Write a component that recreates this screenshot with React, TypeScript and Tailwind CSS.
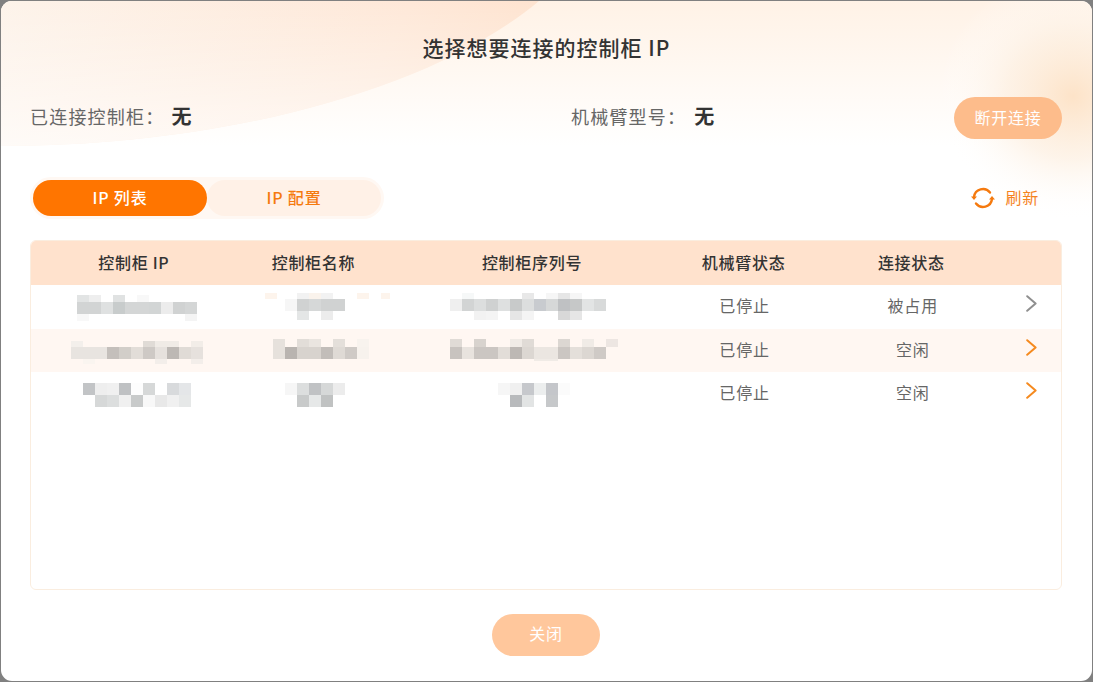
import React from "react"

const COLS = [206, 154, 284, 140, 196, 52]
const ROW_H = 43.6

// one band of mosaic cells; x and y are relative to the table cell
type Band = { x: number; y: number; h: number; cells: string[] }

const Mosaic = ({ width, bands }: { width: number; bands: Band[] }) => (
  <svg width={width} height={ROW_H} className="block" shapeRendering="crispEdges">
    {bands.map((b, i) =>
      b.cells.map((c, j) =>
        c ? <rect key={`${i}-${j}`} x={b.x - 1 + j * 12} y={b.y} width={12} height={b.h} fill={c} /> : null,
      ),
    )}
  </svg>
)

const rows = [
  {
    arm: "已停止",
    status: "被占用",
    active: false,
    ip: [
      { x: 47, y: 10, h: 7, cells: ["#e2e4e4", "#eeeeee", "", "#e0e2e2", "", "#f8f8f8"] },
      { x: 47, y: 17, h: 12, cells: ["#d2d4d4", "#d2d4d4", "#dfe1e1", "#c8cccc", "#d4d6d6", "#d4d6d6", "#d2d5d5", "#ececec", "#d0d2d2", "#d4d6d6"] },
      { x: 47, y: 29, h: 7, cells: ["#f8f8f8", "", "", "", "", "", "", "", "", "#f4f4f4"] },
    ],
    name: [
      { x: 49, y: 8, h: 6, cells: ["", "#f2f2f2", "#faf3ec", "#f2f2f2"] },
      { x: 49, y: 14, h: 12, cells: ["#f6f6f6", "#d0d2d2", "#d6d8d8", "#d0d2d2", "#d0d2d2"] },
      { x: 49, y: 26, h: 9, cells: ["", "#e4e6e6", "", "#ececec"] },
      { x: 121, y: 8, h: 6, cells: ["#fdf4ec", "", "#fdf4ec"] },
      { x: 29, y: 8, h: 6, cells: ["#fdf4ec"] },
    ],
    serial: [
      { x: 61, y: 8, h: 6, cells: ["", "#f6f8f8", "", "", "", "", "#e8e8e8", "", "#f6f6f6", "#e6e6e6", "#f6f6f6"] },
      { x: 61, y: 14, h: 12, cells: ["#efefef", "#d2d4d4", "#dcdede", "#cfd1d1", "#dee0e0", "#c8caca", "#dcdede", "#c8cbcf", "#d6d8d8", "#bfc1c3", "#c6c8c8", "#e2e4e4", "#d8dada"] },
      { x: 61, y: 26, h: 9, cells: ["", "", "#f2f2f2", "#f4f4f4", "", "#e6e6e6", "#f4f4f4", "", "", "#d8d8d8", "#e6e6e6"] },
    ],
  },
  {
    arm: "已停止",
    status: "空闲",
    active: true,
    ip: [
      { x: 41, y: 12, h: 6, cells: ["#f3efeb", "", "", "", "", "", "#e0dbd6", "#f0ebe6", "#f0ebe6", "", "#f2ede8"] },
      { x: 41, y: 18, h: 12, cells: ["#e8e4e0", "#e8e4e0", "#e8e4e0", "#c4bfbb", "#d2cec9", "#e2ddd8", "#cec9c5", "#e6e1dd", "#bdb8b4", "#e0dbd6", "#e6e1dd"] },
      { x: 41, y: 30, h: 5, cells: ["", "#faf5f0", "", "", "", "", "", "#f3eeea", "", "", "#f3eeea"] },
    ],
    name: [
      { x: 37, y: 10, h: 8, cells: ["#e6e1dc", "", "#e2ddd8", "#eae5e0", "", "#e4dfda", "", "#f8f3ee"] },
      { x: 37, y: 18, h: 12, cells: ["#e6e1dc", "#b9b4b0", "#d8d3ce", "#d8d3ce", "#c2bdb9", "#dfdad5", "#cfcac6", "#f7f2ed"] },
    ],
    serial: [
      { x: 61, y: 10, h: 8, cells: ["#e0dbd6", "", "#d8d3ce", "", "", "#f0ebe6", "#e0dbd6", "", "", "#dcd7d2", "", "#f0ebe6", "", "#ede6e2"] },
      { x: 61, y: 18, h: 12, cells: ["#c8c3bf", "#e8e3de", "#cbc6c2", "#cbc6c2", "#e2ddd8", "#bdb8b4", "#dcd7d2", "#ebe6e1", "#ebe6e1", "#cbc6c2", "#e4dfda", "#dcd7d2", "#cfcac6"] },
      { x: 61, y: 30, h: 2, cells: ["", "", "", "", "", "", "", "#f0ebe6", "#f0ebe6"] },
    ],
  },
  {
    arm: "已停止",
    status: "空闲",
    active: true,
    ip: [
      { x: 53, y: 11, h: 12, cells: ["#c2c4c6", "#eeeeee", "#f0f0f0", "#bfc1c3", "#fdfdfd", "#d6d8d8", "", "#d8dadc", "#e4e6e8"] },
      { x: 53, y: 23, h: 12, cells: ["", "#d6d8d8", "#dcdede", "#f0f0f0", "#c8caca", "#f8f8f8", "#e8e8e8", "#f0f0f0", "#e6e8e8"] },
    ],
    name: [
      { x: 49, y: 11, h: 12, cells: ["#f6f6f6", "#dcdede", "#c0c2c4", "#d6d8d8", "#ececec"] },
      { x: 49, y: 23, h: 12, cells: ["", "#c8caca", "#e6e8e8", "#c0c2c2"] },
    ],
    serial: [
      { x: 109, y: 11, h: 12, cells: ["#f6f6f6", "#f0f0f0", "#c6c8cc", "#eceeee", "#c4c6ca", "#fbfbfb"] },
      { x: 109, y: 23, h: 12, cells: ["", "#b8babc", "#e2e4e4", "", "#c6c8ca"] },
    ],
  },
]

const headers = ["控制柜 IP", "控制柜名称", "控制柜序列号", "机械臂状态", "连接状态", ""]

const RefreshIcon = () => (
  <svg width="24" height="24" viewBox="0 0 24 24" fill="none" className="text-[#f57a0f]">
    <path d="M3 11A9 9 0 0 1 19 6.5" stroke="currentColor" strokeWidth="2.4" strokeLinecap="round" />
    <path d="M21 13A9 9 0 0 1 5 17.5" stroke="currentColor" strokeWidth="2.4" strokeLinecap="round" />
    <path d="M0 10.5h6l-3 3.6z" fill="currentColor" />
    <path d="M18 13.5h6l-3-3.6z" fill="currentColor" />
  </svg>
)

const Chevron = ({ active }: { active: boolean }) => (
  <svg width="11" height="17" viewBox="0 0 11 17" fill="none" className={active ? "text-[#f58a1f]" : "text-[#8f8f8f]"}>
    <path d="M1.2 1.2L9.6 8.5L1.2 15.8" stroke="currentColor" strokeWidth="2" strokeLinecap="round" strokeLinejoin="round" />
  </svg>
)

export default function App() {
  return (
    <div className="w-[1093px] h-[682px] bg-[#808080] p-px overflow-hidden font-['Noto_Sans_CJK_SC',sans-serif]">
      <div className="relative w-full h-[680px] bg-white rounded-[11px] overflow-hidden">
        {/* background decoration */}
        <svg width="1091" height="240" className="absolute left-0 top-0" fill="none">
          <defs>
            <linearGradient id="top" x1="0" y1="0" x2="0" y2="1">
              <stop offset="0" stopColor="#fff2e6" />
              <stop offset="1" stopColor="#ffffff" />
            </linearGradient>
            <linearGradient id="wave" x1="0" y1="0" x2="1" y2="0.15">
              <stop offset="0" stopColor="#fdf3ea" />
              <stop offset="0.75" stopColor="#fee8d8" />
              <stop offset="1" stopColor="#fee3cf" />
            </linearGradient>
            <linearGradient id="fade" x1="0" y1="0" x2="0" y2="1">
              <stop offset="0" stopColor="#fff" stopOpacity="0" />
              <stop offset="1" stopColor="#fff" stopOpacity="0.7" />
            </linearGradient>
            <radialGradient id="blob">
              <stop offset="0" stopColor="#fde3c8" />
              <stop offset="0.5" stopColor="#fdf0e2" stopOpacity="0.75" />
              <stop offset="1" stopColor="#fff" stopOpacity="0" />
            </radialGradient>
          </defs>
          <rect width="1091" height="145" fill="url(#top)" />
          <path d="M0 0H538C430 90 220 145 0 145Z" fill="url(#wave)" />
          <path d="M0 0H538C430 90 220 145 0 145Z" fill="url(#fade)" />
          <ellipse cx="1072" cy="95" rx="135" ry="125" fill="url(#blob)" />
        </svg>

        <div className="relative flex flex-col h-full pl-[29px] pr-[30px]">
          <h1 className="h-[96px] pt-[28px] pl-[1px] text-center text-[21px] leading-[36px] tracking-[1px] font-medium text-[#333333]">
            选择想要连接的控制柜 IP
          </h1>

          <div className="flex items-center h-[42px] text-[18px] tracking-[1.2px] text-[#666666]">
            <div className="flex items-center w-[541px] pb-[4px]">
              <span>已连接控制柜：</span>
              <span className="ml-[7px] text-[20px] font-bold text-[#333333]">无</span>
            </div>
            <div className="flex items-center pb-[4px]">
              <span>机械臂型号：</span>
              <span className="ml-[8px] text-[20px] font-bold text-[#333333]">无</span>
            </div>
            <button className="ml-auto w-[108px] h-[42px] pb-[3px] rounded-full bg-[#fdbc8b] text-[16px] tracking-[0.8px] text-white">
              断开连接
            </button>
          </div>

          <div className="flex items-center justify-between mt-[38px] h-[42px]">
            <div className="flex items-center w-[354px] h-[42px] p-[3px] rounded-full bg-[#fff8f3]">
              <button className="w-[174px] h-[36px] pb-[3px] rounded-full bg-[#ff7500] text-[16px] tracking-[0.8px] font-medium text-white">
                IP 列表
              </button>
              <button className="w-[174px] h-[36px] pb-[3px] rounded-full bg-[#fff1e7] text-[16px] tracking-[0.8px] font-medium text-[#f57a0f]">
                IP 配置
              </button>
            </div>
            <div className="flex items-center gap-[10px] mr-[23px] text-[16px] tracking-[0.8px] text-[#f5831f]">
              <RefreshIcon />
              <span className="pb-[2px]">刷新</span>
            </div>
          </div>

          <div className="mt-[21px] h-[350px] rounded-[6px] border border-[#faeddf] overflow-hidden">
            <div className="flex items-center h-[44px] bg-[#ffe2cd] text-[16px] tracking-[0.7px] font-medium text-[#333333]">
              {headers.map((h, i) => (
                <div key={i} className="mb-[2px] text-center" style={{ width: COLS[i] }}>
                  {h}
                </div>
              ))}
            </div>
            {rows.map((r, i) => (
              <div key={i} className={`flex items-center h-[43.6px] text-[16px] tracking-[0.9px] text-[#666666] ${i === 1 ? "bg-[#fff7f2]" : "bg-white"}`}>
                <Mosaic width={COLS[0]} bands={r.ip} />
                <Mosaic width={COLS[1]} bands={r.name} />
                <Mosaic width={COLS[2]} bands={r.serial} />
                <div className="w-[140px] mb-[3px] pl-[2px] text-center">{r.arm}</div>
                <div className="w-[196px] mb-[3px] pl-[3px] text-center">{r.status}</div>
                <div className="w-[52px] flex justify-center">
                  <div className="mr-[7px] mb-[6px]">
                    <Chevron active={r.active} />
                  </div>
                </div>
              </div>
            ))}
          </div>

          <div className="flex justify-center mt-[24px]">
            <button className="w-[108px] h-[42px] pb-[4px] rounded-full bg-[#ffc79c] text-[16px] tracking-[0.8px] text-white">关闭</button>
          </div>
        </div>
      </div>
    </div>
  )
}
